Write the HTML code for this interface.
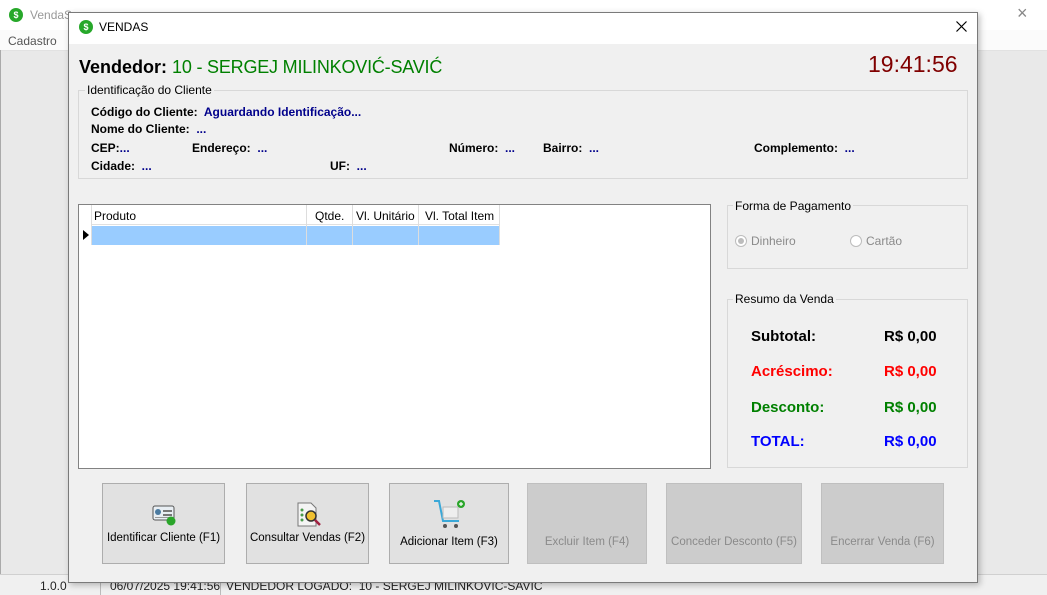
<!DOCTYPE html>
<html><head><meta charset="utf-8"><style>
*{margin:0;padding:0;box-sizing:border-box}
body{width:1047px;height:595px;position:relative;overflow:hidden;background:#e9e9e9;font-family:"Liberation Sans",sans-serif;font-size:12px;color:#000}
.a{position:absolute;white-space:nowrap}
.b{font-weight:bold}
.bl{color:#00008b}
.grp{position:absolute;border:1px solid #d8d8d8}
.btn{position:absolute;border:1px solid #adadad;background:#e1e1e1;text-align:center;font-size:11.5px}
.dis{background:#cccccc;border-color:#bfbfbf;color:#8a8a8a}
.btn span{position:absolute;left:0;right:0}
</style></head><body>
<div class="a" style="left:0;top:0;width:1047px;height:50px;background:#fff"></div>
<div class="a" style="left:0;top:30px;width:1047px;height:20px;background:#fbfbfb"></div>
<div class="a" style="left:0;top:50px;width:1047px;height:1px;background:#e2e2e2"></div>
<div class="a" style="left:9px;top:8px;width:14px;height:14px;border-radius:50%;background:#27a82a;color:#fff;font-size:9px;font-weight:bold;text-align:center;line-height:14px">$</div>
<div class="a" style="left:30px;top:8px;color:#999">VendaS</div>
<div class="a" style="left:8px;top:34px;color:#555">Cadastro</div>
<div class="a" style="left:1017px;top:3px;font-size:18px;color:#888;font-weight:300">×</div>
<div class="a" style="left:0;top:574px;width:1047px;height:21px;background:#f0f0f0;border-top:1px solid #d0d0d0"></div>
<div class="a" style="left:40px;top:579px;color:#222">1.0.0</div>
<div class="a" style="left:100px;top:576px;width:1px;height:19px;background:#bbb"></div>
<div class="a" style="left:110px;top:579px;color:#222">06/07/2025 19:41:56</div>
<div class="a" style="left:220px;top:576px;width:1px;height:19px;background:#bbb"></div>
<div class="a" style="left:226px;top:579px;color:#222">VENDEDOR LOGADO:&nbsp; 10 - SERGEJ MILINKOVIC-SAVIC</div>
<div class="a" style="left:0;top:50px;width:1px;height:524px;background:#aaa"></div>
<div class="a" style="left:68px;top:12px;width:910px;height:571px;background:#f0f0f0;border:1px solid #7a7a7a;box-shadow:2px 2px 6px rgba(0,0,0,.25)">
<div class="a" style="left:0;top:0;width:908px;height:31px;background:#fff"></div>
</div>
<div class="a" style="left:79px;top:20px;width:14px;height:14px;border-radius:50%;background:#27a82a;color:#fff;font-size:9px;font-weight:bold;text-align:center;line-height:14px">$</div>
<div class="a" style="left:99px;top:20px">VENDAS</div>
<svg class="a" style="left:956px;top:21px" width="11" height="11" viewBox="0 0 11 11"><path d="M0.5 0.5l10 10M10.5 0.5l-10 10" stroke="#000" stroke-width="1.2"/></svg>
<div class="a b" style="left:79px;top:57px;font-size:18px">Vendedor: <span style="color:#008000;font-weight:normal;letter-spacing:-0.2px">10 - SERGEJ MILINKOVIĆ-SAVIĆ</span></div>
<div class="a" style="left:868px;top:51px;font-size:23px;color:#800000">19:41:56</div>
<div class="grp" style="left:78px;top:90px;width:890px;height:89px"></div>
<div class="a" style="left:85px;top:83px;background:#f0f0f0;padding:0 2px">Identificação do Cliente</div>
<div class="a b" style="left:91px;top:105px">Código do Cliente:&nbsp; <span class="bl">Aguardando Identificação...</span></div>
<div class="a b" style="left:91px;top:122px">Nome do Cliente:&nbsp; <span class="bl">...</span></div>
<div class="a b" style="left:91px;top:141px">CEP:<span class="bl">...</span></div>
<div class="a b" style="left:192px;top:141px">Endereço:&nbsp; <span class="bl">...</span></div>
<div class="a b" style="left:449px;top:141px">Número:&nbsp; <span class="bl">...</span></div>
<div class="a b" style="left:543px;top:141px">Bairro:&nbsp; <span class="bl">...</span></div>
<div class="a b" style="left:754px;top:141px">Complemento:&nbsp; <span class="bl">...</span></div>
<div class="a b" style="left:91px;top:159px">Cidade:&nbsp; <span class="bl">...</span></div>
<div class="a b" style="left:330px;top:159px">UF:&nbsp; <span class="bl">...</span></div>
<div class="a" style="left:78px;top:204px;width:633px;height:265px;background:#fff;border:1px solid #828282"></div>
<div class="a" style="left:91px;top:205px;width:409px;height:20px;border-bottom:1px solid #e0e0e0"></div>
<div class="a" style="left:91px;top:226px;width:408px;height:19px;background:#99ccff"></div>
<div class="a" style="left:91px;top:205px;width:1px;height:40px;background:#ddd"></div>
<div class="a" style="left:306px;top:205px;width:1px;height:40px;background:#ddd"></div>
<div class="a" style="left:352px;top:205px;width:1px;height:40px;background:#ddd"></div>
<div class="a" style="left:418px;top:205px;width:1px;height:40px;background:#ddd"></div>
<div class="a" style="left:499px;top:205px;width:1px;height:40px;background:#ddd"></div>
<div class="a" style="left:94px;top:209px">Produto</div>
<div class="a" style="left:315px;top:209px">Qtde.</div>
<div class="a" style="left:356px;top:209px">Vl. Unitário</div>
<div class="a" style="left:425px;top:209px">Vl. Total Item</div>
<div class="a" style="left:83px;top:230px;width:0;height:0;border-left:6px solid #000;border-top:5px solid transparent;border-bottom:5px solid transparent"></div>
<div class="grp" style="left:727px;top:205px;width:241px;height:64px"></div>
<div class="a" style="left:733px;top:199px;background:#f0f0f0;padding:0 2px">Forma de Pagamento</div>
<div class="a" style="left:735px;top:235px;width:12px;height:12px;border-radius:50%;border:1px solid #bcbcbc;background:#fff"><div style="margin:2px;width:6px;height:6px;border-radius:50%;background:#bcbcbc"></div></div>
<div class="a" style="left:751px;top:234px;color:#8a8a8a">Dinheiro</div>
<div class="a" style="left:850px;top:235px;width:12px;height:12px;border-radius:50%;border:1px solid #bcbcbc;background:#fff"></div>
<div class="a" style="left:866px;top:234px;color:#8a8a8a">Cartão</div>
<div class="grp" style="left:727px;top:299px;width:241px;height:169px"></div>
<div class="a" style="left:733px;top:292px;background:#f0f0f0;padding:0 2px">Resumo da Venda</div>
<div class="a b" style="left:751px;top:328px;font-size:15px">Subtotal:</div>
<div class="a b" style="left:884px;top:328px;font-size:15px">R$ 0,00</div>
<div class="a b" style="left:751px;top:363px;font-size:15px;color:#ff0000">Acréscimo:</div>
<div class="a b" style="left:884px;top:363px;font-size:15px;color:#ff0000">R$ 0,00</div>
<div class="a b" style="left:751px;top:399px;font-size:15px;color:#008000">Desconto:</div>
<div class="a b" style="left:884px;top:399px;font-size:15px;color:#008000">R$ 0,00</div>
<div class="a b" style="left:751px;top:433px;font-size:15px;color:#0000ff">TOTAL:</div>
<div class="a b" style="left:884px;top:433px;font-size:15px;color:#0000ff">R$ 0,00</div>
<div class="btn" style="left:102px;top:483px;width:123px;height:81px">
<svg class="a" style="left:49px;top:19px" width="25" height="24" viewBox="0 0 25 24"><rect x="1" y="3" width="21" height="14" rx="2" fill="#e8eef3" stroke="#555"/><circle cx="6" cy="9" r="3" fill="#4a7aa0"/><rect x="11" y="7" width="9" height="2" fill="#777"/><rect x="11" y="11" width="9" height="2" fill="#777"/><rect x="3" y="14" width="17" height="1" fill="#999"/><circle cx="19" cy="18" r="4.5" fill="#2aa52a"/></svg>
<span style="top:48px">Identificar Cliente (F1)</span></div>
<div class="btn" style="left:246px;top:483px;width:123px;height:81px">
<svg class="a" style="left:49px;top:18px" width="26" height="26" viewBox="0 0 26 26"><path d="M2 1h13l5 5v18H2z" fill="#f4f4f4" stroke="#777"/><circle cx="6" cy="8" r="1.5" fill="#4a9a4a"/><circle cx="6" cy="13" r="1.5" fill="#4a9a4a"/><circle cx="6" cy="18" r="1.5" fill="#4a9a4a"/><circle cx="15" cy="14" r="5" fill="#f0c030" stroke="#333" stroke-width="1.5"/><path d="M19 18l5 5" stroke="#a02040" stroke-width="2.5"/></svg>
<span style="top:48px">Consultar Vendas (F2)</span></div>
<div class="btn" style="left:389px;top:483px;width:120px;height:81px">
<svg class="a" style="left:42px;top:14px" width="36" height="34" viewBox="0 0 36 34"><path d="M2 3h5l4 20h16" fill="none" stroke="#3aa8d8" stroke-width="2"/><rect x="11" y="9" width="15" height="11" fill="#eee" stroke="#bbb"/><circle cx="13" cy="28" r="2" fill="#555"/><circle cx="24" cy="28" r="2" fill="#555"/><circle cx="29" cy="6" r="4" fill="#2aa52a"/><path d="M29 4v4M27 6h4" stroke="#fff" stroke-width="1.2"/></svg>
<span style="top:52px">Adicionar Item (F3)</span></div>
<div class="btn dis" style="left:527px;top:483px;width:120px;height:81px"><span style="top:52px">Excluir Item (F4)</span></div>
<div class="btn dis" style="left:666px;top:483px;width:136px;height:81px"><span style="top:52px">Conceder Desconto (F5)</span></div>
<div class="btn dis" style="left:821px;top:483px;width:123px;height:81px"><span style="top:52px">Encerrar Venda (F6)</span></div>
</body></html>
